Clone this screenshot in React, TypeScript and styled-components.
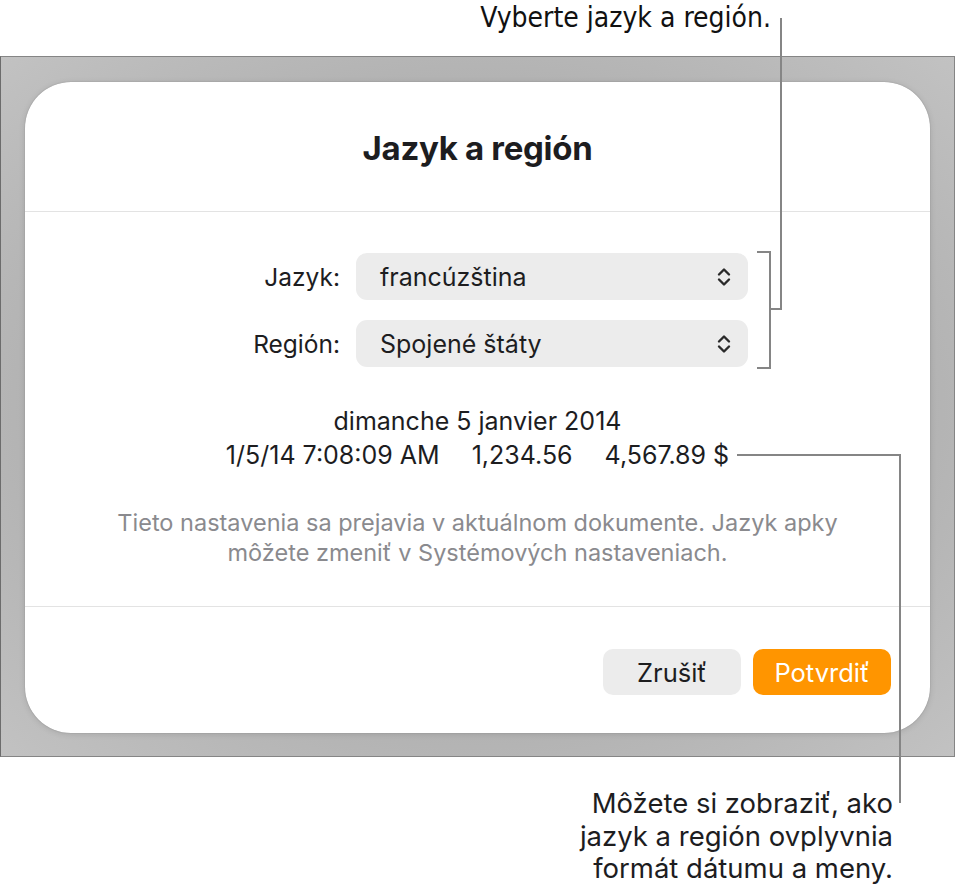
import styled, { createGlobalStyle } from 'styled-components';

const GlobalStyle = createGlobalStyle`
  html, body {
    margin: 0;
    padding: 0;
    background: #ffffff;
  }
  body {
    font-family: Inter, "Noto Sans", sans-serif;
    color: #1d1d1f;
  }
`;

const Page = styled.div`
  position: relative;
  width: 955px;
  height: 891px;
  overflow: hidden;
`;

const TopNote = styled.div`
  height: 56px;
  display: flex;
  justify-content: flex-end;
  padding-right: 184px;
  box-sizing: border-box;
`;

const NarrowText = styled.span`
  font-family: "Liberation Sans Narrow", "DejaVu Sans Condensed", Roboto, sans-serif;
  font-size: 28px;
  line-height: 36px;
  color: #111;
`;

const Backdrop = styled.div`
  height: 701px;
  box-sizing: border-box;
  border: 1px solid #858585;
  border-left-color: #6c6c6c;
  background: radial-gradient(ellipse at center, #b0b0b0 60%, #c2c2c2 100%);
  padding: 25px 24px 0 24px;
`;

const Dialog = styled.div`
  width: 905px;
  height: 651px;
  background: #ffffff;
  border-radius: 46px;
  box-shadow: 0 0 1px rgba(0, 0, 0, 0.35), 0 1px 6px rgba(0, 0, 0, 0.12);
  display: flex;
  flex-direction: column;
  overflow: hidden;
`;

const Header = styled.div`
  height: 129px;
  display: flex;
  align-items: center;
  justify-content: center;
  padding-top: 2px;
  box-sizing: border-box;
`;

const Title = styled.h1`
  margin: 0;
  font-size: 33px;
  font-weight: 700;
  letter-spacing: -0.3px;
  color: #1d1d1f;
`;

const Divider = styled.div`
  height: 1px;
  background: #e3e3e3;
`;

const Body = styled.div`
  height: 394px;
  display: flex;
  flex-direction: column;
  padding-top: 41px;
  box-sizing: border-box;
`;

const FormGrid = styled.div`
  display: grid;
  grid-template-columns: 315px 392px;
  column-gap: 16px;
  row-gap: 20px;
  align-items: center;
`;

const Label = styled.label`
  text-align: right;
  font-size: 24.5px;
  color: #1d1d1f;
`;

const Popup = styled.div`
  height: 47px;
  border-radius: 11px;
  background: #ececec;
  display: flex;
  align-items: center;
  justify-content: space-between;
  padding: 0 16px 0 24px;
  box-sizing: border-box;
  font-size: 25px;
  color: #1d1d1f;
`;

const Sample = styled.div`
  margin-top: 37px;
  display: flex;
  flex-direction: column;
  align-items: center;
  font-size: 25px;
  line-height: 34px;
  color: #1d1d1f;
`;

const SampleRow = styled.div`
  display: flex;
  gap: 32px;
`;

const Hint = styled.p`
  margin: 36px 0 0;
  text-align: center;
  font-size: 23.5px;
  line-height: 30px;
  color: #8a8a8e;
  padding: 0 40px;
`;

const Footer = styled.div`
  flex: 1;
  display: flex;
  justify-content: flex-end;
  align-items: flex-start;
  gap: 12px;
  padding: 42px 39px 0 0;
`;

const Button = styled.button<{ $primary?: boolean }>`
  width: 138px;
  height: 46px;
  border: none;
  border-radius: 10px;
  font-family: Inter, "Noto Sans", sans-serif;
  font-size: 25.5px;
  background: ${({ $primary }) => ($primary ? '#ff9500' : '#ececec')};
  color: ${({ $primary }) => ($primary ? '#ffffff' : '#1d1d1f')};
`;

const BottomNote = styled.div`
  display: flex;
  justify-content: flex-end;
  padding: 30px 62px 0 0;
`;

const NoteText = styled.p`
  margin: 0;
  text-align: right;
  font-size: 27.5px;
  line-height: 32.5px;
  color: #1d1d1f;
`;

const Leaders = styled.svg`
  position: absolute;
  left: 0;
  top: 0;
  pointer-events: none;
`;

const Chevrons = () => (
  <svg width="16" height="22" viewBox="0 0 16 22" fill="none">
    <path d="M3 8.5 L8 3.5 L13 8.5" stroke="#2a2a2a" strokeWidth="2.4" strokeLinecap="round" strokeLinejoin="round" />
    <path d="M3 13.5 L8 18.5 L13 13.5" stroke="#2a2a2a" strokeWidth="2.4" strokeLinecap="round" strokeLinejoin="round" />
  </svg>
);

export default function App() {
  return (
    <>
      <GlobalStyle />
      <Page>
        <TopNote>
          <NarrowText>Vyberte jazyk a región.</NarrowText>
        </TopNote>
        <Backdrop>
          <Dialog>
            <Header>
              <Title>Jazyk a región</Title>
            </Header>
            <Divider />
            <Body>
              <FormGrid>
                <Label>Jazyk:</Label>
                <Popup>
                  francúzština
                  <Chevrons />
                </Popup>
                <Label>Región:</Label>
                <Popup>
                  Spojené štáty
                  <Chevrons />
                </Popup>
              </FormGrid>
              <Sample>
                <div>dimanche 5 janvier 2014</div>
                <SampleRow>
                  <span>1/5/14 7:08:09 AM</span>
                  <span>1,234.56</span>
                  <span>4,567.89 $</span>
                </SampleRow>
              </Sample>
              <Hint>
                Tieto nastavenia sa prejavia v aktuálnom dokumente. Jazyk apky
                <br />
                môžete zmeniť v Systémových nastaveniach.
              </Hint>
            </Body>
            <Divider />
            <Footer>
              <Button>Zrušiť</Button>
              <Button $primary>Potvrdiť</Button>
            </Footer>
          </Dialog>
        </Backdrop>
        <BottomNote>
          <NoteText>
            Môžete si zobraziť, ako
            <br />
            jazyk a región ovplyvnia
            <br />
            formát dátumu a meny.
          </NoteText>
        </BottomNote>
        <Leaders width="955" height="891" viewBox="0 0 955 891">
          <g stroke="#858585" strokeWidth="2" fill="none">
            <polyline points="781,18 781,309 770,309" />
            <polyline points="757,252 770,252 770,368 757,368" />
            <polyline points="737,455 900,455 900,803" />
          </g>
        </Leaders>
      </Page>
    </>
  );
}
